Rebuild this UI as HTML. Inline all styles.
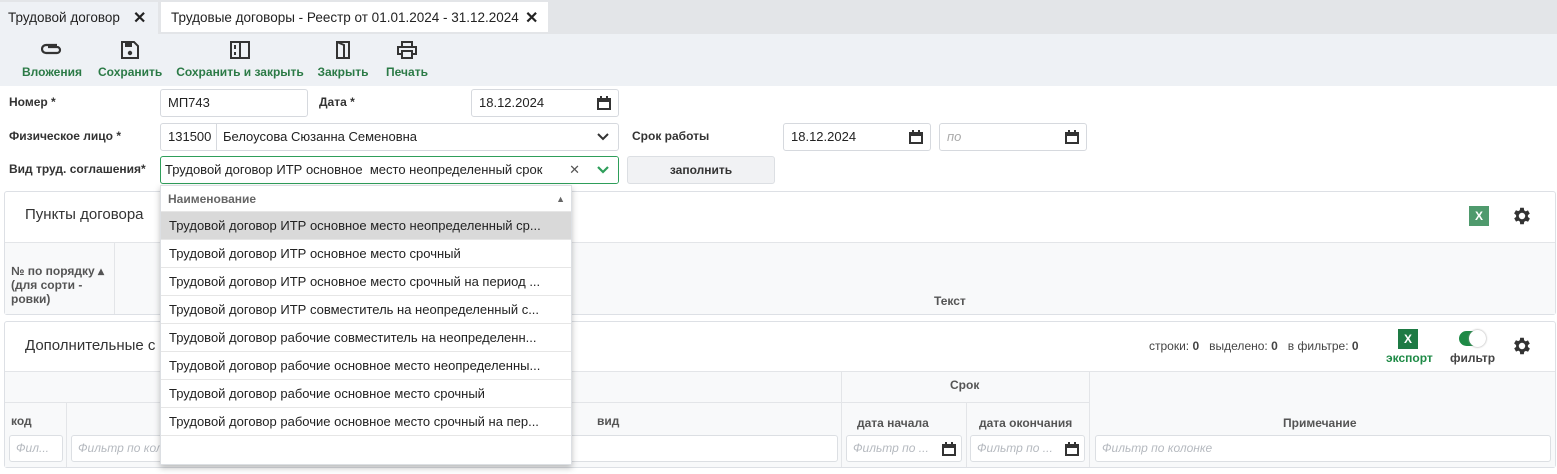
<!DOCTYPE html>
<html><head><meta charset="utf-8"><style>
*{box-sizing:border-box;margin:0;padding:0}
body{width:1557px;height:474px;overflow:hidden;background:#fff;font-family:"Liberation Sans",sans-serif;font-size:13px;color:#222;position:relative}
.a{position:absolute}
.lbl{font-size:12px;color:#333;font-weight:bold}
.inp{position:absolute;border:1px solid #d6d9de;border-radius:3px;background:#fff;height:28px;line-height:26px;padding-left:7px;font-size:13px}
.tb{position:absolute;top:40px;text-align:center;color:#2b7a46;font-size:12px;font-weight:bold;white-space:nowrap}
.tb svg{display:block;margin:0 auto 5px}
.dd div.r{height:28px;line-height:28px;padding-left:8px;border-bottom:1px solid #e6e6e6;font-size:13px;white-space:nowrap;overflow:hidden}
.th{font-size:12px;color:#555;font-weight:bold}
.flt{position:absolute;border:1px solid #dcdfe3;border-radius:3px;height:27px;line-height:25px;padding-left:6px;color:#b5b9bf;font-style:italic;font-size:12px;background:#fff}
.cal{position:absolute;right:7px;top:6px}
</style></head><body>
<svg width="0" height="0" style="position:absolute"><defs>
<symbol id="cal" viewBox="0 0 14 14"><path d="M1 3h12v10H1z" fill="none" stroke="#333" stroke-width="2"/><rect x="1" y="3" width="12" height="3" fill="#333"/><path d="M4 0v3M10 0v3" stroke="#333" stroke-width="2"/></symbol>
<symbol id="gear" viewBox="0 0 24 24"><path fill="#333" d="M19.4 13a7.5 7.5 0 0 0 0-2l2.1-1.6-2-3.5-2.5 1a7 7 0 0 0-1.7-1L15 3h-4l-.4 2.7a7 7 0 0 0-1.7 1l-2.5-1-2 3.5L6.6 11a7.5 7.5 0 0 0 0 2l-2.1 1.6 2 3.5 2.5-1a7 7 0 0 0 1.7 1L11 21h4l.4-2.7a7 7 0 0 0 1.7-1l2.5 1 2-3.5zM13 15.5a3.5 3.5 0 1 1 0-7 3.5 3.5 0 0 1 0 7z" transform="translate(-1 0)"/></symbol>
</defs></svg>
<!-- tabs -->
<div class="a" style="left:0;top:0;width:1557px;height:34px;background:#e3e5e8"></div>
<div class="a" style="left:0;top:2px;width:158px;height:32px;background:#eef1f5;padding:8px 0 0 8px;font-size:13.5px">Трудовой договор <span style="position:absolute;left:133px;top:6px;font-weight:bold;font-size:16px">✕</span></div>
<div class="a" style="left:161px;top:2px;width:387px;height:30px;background:#fff;padding:8px 0 0 10px;font-size:13.5px">Трудовые договоры - Реестр от 01.01.2024 - 31.12.2024<span style="position:absolute;left:364px;top:6px;font-weight:bold;font-size:16px">✕</span></div>
<!-- toolbar -->
<div class="a" style="left:0;top:34px;width:1557px;height:52px;background:#eef1f5"></div>
<div class="tb" style="left:20px;width:64px"><svg width="22" height="20" viewBox="0 0 22 20"><path d="M7 7h9a3 3 0 0 1 0 6H5a4 4 0 0 1 0-8h11" fill="none" stroke="#333" stroke-width="2.2"/></svg>Вложения</div>
<div class="tb" style="left:98px;width:64px"><svg width="20" height="20" viewBox="0 0 20 20"><path d="M2 2h12l4 4v12H2z" fill="none" stroke="#333" stroke-width="2"/><rect x="5" y="3" width="7" height="4" fill="#333"/><circle cx="10" cy="13" r="2.2" fill="#333"/></svg>Сохранить</div>
<div class="tb" style="left:176px;width:128px"><svg width="22" height="20" viewBox="0 0 22 20"><path d="M2 2h18v16H2zM11 2v16M6 5v4M6 12v3" fill="none" stroke="#333" stroke-width="2"/></svg>Сохранить и закрыть</div>
<div class="tb" style="left:316px;width:54px"><svg width="18" height="20" viewBox="0 0 18 20"><path d="M3 2h12v16H3zM3 2l7 3v14" fill="none" stroke="#333" stroke-width="2"/></svg>Закрыть</div>
<div class="tb" style="left:384px;width:46px"><svg width="22" height="20" viewBox="0 0 22 20"><path d="M6 7V2h10v5M6 14H2V7h18v7h-4M6 11h10v7H6z" fill="none" stroke="#333" stroke-width="2"/></svg>Печать</div>
<!-- form -->
<div class="a lbl" style="left:9px;top:95px">Номер *</div>
<div class="inp" style="left:160px;top:89px;width:148px">МП743</div>
<div class="a lbl" style="left:319px;top:95px">Дата *</div>
<div class="inp" style="left:471px;top:89px;width:148px">18.12.2024<svg class="cal" width="14" height="14"><use href="#cal"/></svg></div>
<div class="a lbl" style="left:9px;top:129px">Физическое лицо *</div>
<div class="inp" style="left:160px;top:123px;width:459px">131500<span style="position:absolute;left:55px;top:0;bottom:0;border-left:1px solid #d6d9de;padding-left:6px">Белоусова Сюзанна Семеновна</span><svg style="position:absolute;right:9px;top:9px" width="12" height="8"><path d="M1 1l5 5 5-5" fill="none" stroke="#333" stroke-width="2"/></svg></div>
<div class="a lbl" style="left:632px;top:129px">Срок работы</div>
<div class="inp" style="left:783px;top:123px;width:148px">18.12.2024<svg class="cal" width="14" height="14"><use href="#cal"/></svg></div>
<div class="inp" style="left:939px;top:123px;width:148px;color:#aaa;font-style:italic">по<svg class="cal" width="14" height="14"><use href="#cal"/></svg></div>
<div class="a lbl" style="left:9px;top:162px">Вид труд. соглашения*</div>
<div class="inp" style="left:160px;top:156px;width:459px;border-color:#2e9e5a;padding-left:4px;white-space:nowrap;overflow:hidden">Трудовой договор ИТР основное &nbsp;место неопределенный срок<span style="position:absolute;right:0;top:0;width:60px;height:26px;background:#fff"></span><span style="position:absolute;right:38px;top:0;color:#555">✕</span><svg style="position:absolute;right:9px;top:9px" width="12" height="8"><path d="M1 1l5 5 5-5" fill="none" stroke="#2e9e5a" stroke-width="2.2"/></svg></div>
<div class="a" style="left:627px;top:156px;width:148px;height:28px;background:#f1f2f4;border:1px solid #dcdfe3;border-radius:3px;text-align:center;line-height:26px;font-size:12px;font-weight:bold;color:#333">заполнить</div>
<!-- panel 1 -->
<div class="a" style="left:4px;top:191px;width:1552px;height:124px;border:1px solid #dde0e5;border-radius:3px"></div>
<div class="a" style="left:25px;top:206px;font-size:15px;color:#333">Пункты договора</div>
<div class="a" style="left:1469px;top:206px;width:20px;height:20px;background:#4f9a6d;color:#fff;font-size:12px;font-weight:bold;text-align:center;line-height:20px">X</div>
<svg class="a" style="left:1511px;top:205px" width="22" height="22"><use href="#gear"/></svg>
<div class="a" style="left:5px;top:242px;width:1550px;height:72px;background:#f8f9fa;border-top:1px solid #e3e5e8"></div>
<div class="a" style="left:114px;top:243px;width:1px;height:71px;background:#e3e5e8"></div>
<div class="a th" style="left:11px;top:264px;line-height:14px">№ по порядку ▴<br>(для сорти -<br>ровки)</div>
<div class="a th" style="left:934px;top:294px">Текст</div>
<!-- panel 2 -->
<div class="a" style="left:4px;top:321px;width:1552px;height:147px;border:1px solid #dde0e5;border-radius:3px"></div>
<div class="a" style="left:25px;top:337px;font-size:15px;color:#333">Дополнительные с</div>
<div class="a" style="left:1149px;top:339px;font-size:12px;color:#444">строки: <b>0</b> &nbsp;&nbsp;выделено: <b>0</b> &nbsp;&nbsp;в фильтре: <b>0</b></div>
<div class="a" style="left:1398px;top:329px;width:20px;height:20px;background:#1e7a44;color:#fff;font-size:12px;font-weight:bold;text-align:center;line-height:20px">X</div>
<div class="a" style="left:1386px;top:351px;font-size:12px;font-weight:bold;color:#1e8a46">экспорт</div>
<div class="a" style="left:1459px;top:331px;width:25px;height:15px;border-radius:8px;background:#1e8a46"></div>
<div class="a" style="left:1469px;top:330px;width:17px;height:17px;border-radius:50%;background:#fff;box-shadow:0 0 2px #999"></div>
<div class="a" style="left:1450px;top:351px;font-size:12px;font-weight:bold;color:#444">фильтр</div>
<svg class="a" style="left:1511px;top:335px" width="22" height="22"><use href="#gear"/></svg>
<div class="a" style="left:5px;top:371px;width:1550px;height:96px;background:#f8f9fa;border-top:1px solid #e3e5e8"></div>
<div class="a" style="left:5px;top:402px;width:836px;height:1px;background:#e3e5e8"></div>
<div class="a" style="left:841px;top:402px;width:248px;height:1px;background:#e3e5e8"></div>
<div class="a" style="left:841px;top:372px;width:1px;height:95px;background:#e3e5e8"></div>
<div class="a" style="left:966px;top:403px;width:1px;height:64px;background:#e3e5e8"></div>
<div class="a" style="left:1089px;top:372px;width:1px;height:95px;background:#e3e5e8"></div>
<div class="a" style="left:66px;top:403px;width:1px;height:64px;background:#e3e5e8"></div>
<div class="a th" style="left:950px;top:378px">Срок</div>
<div class="a th" style="left:11px;top:414px">код</div>
<div class="a th" style="left:597px;top:414px">вид</div>
<div class="a th" style="left:857px;top:416px">дата начала</div>
<div class="a th" style="left:979px;top:416px">дата окончания</div>
<div class="a th" style="left:1283px;top:416px">Примечание</div>
<div class="flt" style="left:9px;top:435px;width:54px">Фил...</div>
<div class="flt" style="left:71px;top:435px;width:767px">Фильтр по колонке</div>
<div class="flt" style="left:846px;top:435px;width:116px">Фильтр по ...<svg class="cal" style="top:6px;right:5px" width="14" height="14"><use href="#cal"/></svg></div>
<div class="flt" style="left:970px;top:435px;width:115px">Фильтр по ...<svg class="cal" style="top:6px;right:5px" width="14" height="14"><use href="#cal"/></svg></div>
<div class="flt" style="left:1095px;top:435px;width:456px">Фильтр по колонке</div>
<!-- dropdown -->
<div class="a dd" style="left:160px;top:185px;width:412px;height:280px;background:#fff;border:1px solid #dcdfe3;box-shadow:0 3px 6px rgba(0,0,0,.25)">
<div style="height:26px;line-height:26px;padding-left:7px;font-size:12px;font-weight:bold;color:#666;border-bottom:1px solid #e6e6e6">Наименование<span style="position:absolute;right:6px;font-size:9px">▲</span></div>
<div class="r" style="background:#d9d9d9">Трудовой договор ИТР основное место неопределенный ср...</div>
<div class="r">Трудовой договор ИТР основное место срочный</div>
<div class="r">Трудовой договор ИТР основное место срочный на период ...</div>
<div class="r">Трудовой договор ИТР совместитель на неопределенный с...</div>
<div class="r">Трудовой договор рабочие совместитель на неопределенн...</div>
<div class="r">Трудовой договор рабочие основное место неопределенны...</div>
<div class="r">Трудовой договор рабочие основное место срочный</div>
<div class="r">Трудовой договор рабочие основное место срочный на пер...</div>
</div>
</body></html>
